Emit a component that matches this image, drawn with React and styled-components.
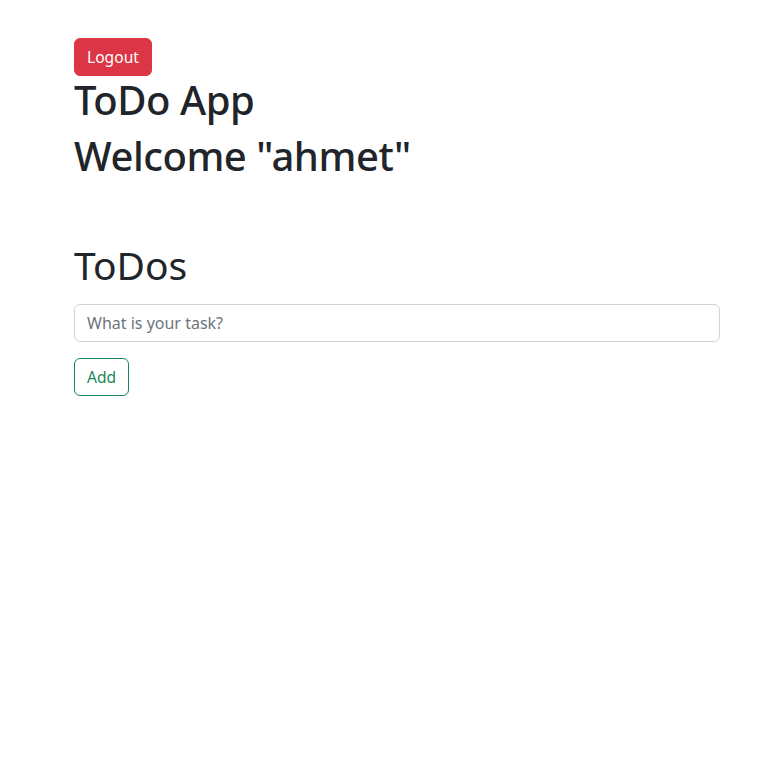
import styled, { createGlobalStyle } from "styled-components";

const GlobalStyle = createGlobalStyle`
  body {
    margin: 0;
    background: #fff;
    color: #212529;
    font-family: "Noto Sans", "Open Sans", sans-serif;
  }
  * { box-sizing: border-box; }
`;

const App = () => {
  return (
    <Page>
      <GlobalStyle />
      <Header>
        <Button $variant="danger">Logout</Button>
        <Title>ToDo App</Title>
        <Title>Welcome "ahmet"</Title>
      </Header>

      <TodoSection>
        <SectionTitle>ToDos</SectionTitle>
        <TaskInput placeholder="What is your task?" />
        <Button $variant="outline-success">Add</Button>
      </TodoSection>
    </Page>
  );
};

const Page = styled.div`
  width: 100%;
  min-height: 764px;
  padding: 38px 45px 0 74px;
  display: flex;
  flex-direction: column;
`;

const Header = styled.div`
  display: flex;
  flex-direction: column;
  align-items: flex-start;
`;

const Button = styled.button`
  font-family: inherit;
  font-size: 15.6px;
  line-height: 24px;
  padding: 6px 12px;
  border-radius: 6px;
  cursor: pointer;
  border: 1px solid ${(p) => (p.$variant === "danger" ? "#dc3545" : "#198754")};
  background: ${(p) => (p.$variant === "danger" ? "#dc3545" : "transparent")};
  color: ${(p) => (p.$variant === "danger" ? "#fff" : "#198754")};
  align-self: flex-start;
`;

const Title = styled.h1`
  margin: 0 0 8px;
  font-size: 40px;
  line-height: 48px;
  font-weight: 500;
  letter-spacing: -0.45px;
`;

const TodoSection = styled.div`
  margin-top: 53px;
  display: flex;
  flex-direction: column;
`;

const SectionTitle = styled.h2`
  margin: 0 0 15px;
  font-size: 39px;
  line-height: 48px;
  font-weight: 400;
`;

const TaskInput = styled.input`
  width: 100%;
  height: 38px;
  padding: 6px 12px;
  font-family: inherit;
  font-size: 16px;
  color: #212529;
  border: 1px solid #ced4da;
  border-radius: 6px;
  margin-bottom: 16px;
  outline: none;

  &::placeholder {
    color: #6c757d;
  }
`;

export default App;
